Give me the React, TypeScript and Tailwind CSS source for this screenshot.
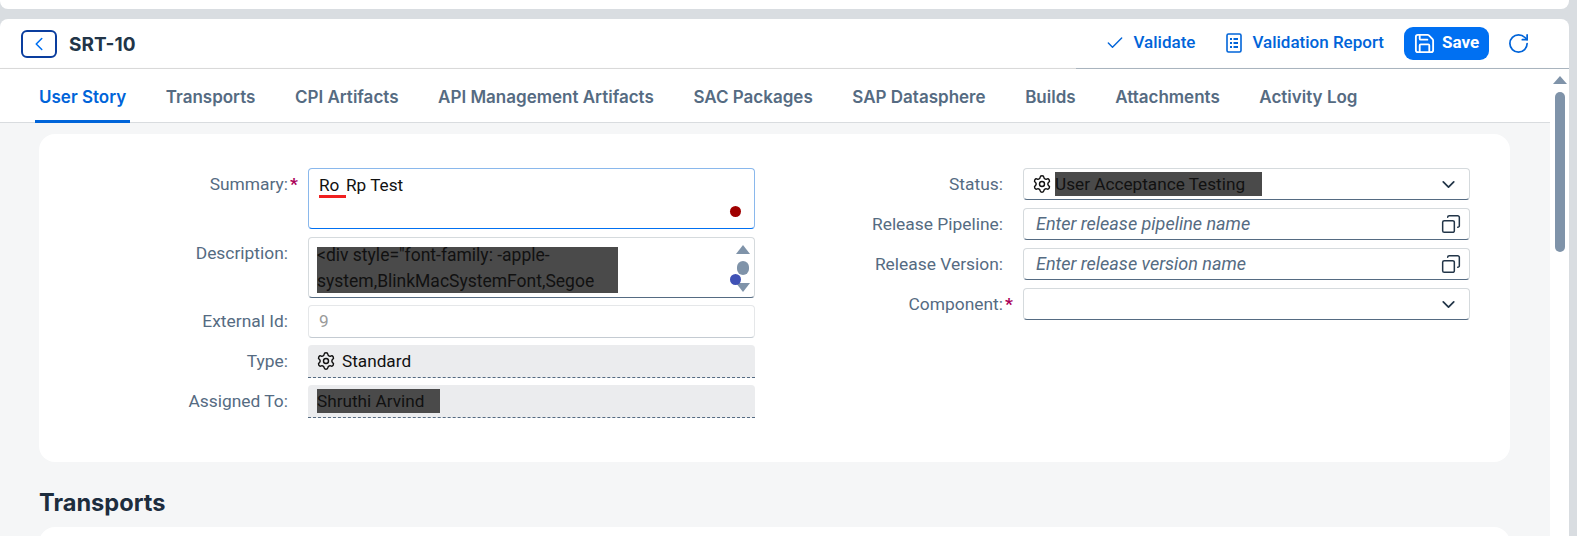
import { Check, ChevronDown, ChevronLeft, Copy, RotateCw, Save, Settings } from "lucide-react";

const tabs = ["User Story", "Transports", "CPI Artifacts", "API Management Artifacts", "SAC Packages", "SAP Datasphere", "Builds", "Attachments", "Activity Log"];

function Label({ text, required, width }: { text: string; required?: boolean; width: string }) {
  return (
    <div className={`flex shrink-0 pt-[4px] text-[17.4px] leading-[24px] text-[#556b82] ${width}`}>
      <span className="flex-1 text-right">{text}</span>
      <span className="w-[20px] pl-[2px] font-bold text-[#aa0058]">{required ? "*" : ""}</span>
    </div>
  );
}

function ReportIcon() {
  return (
    <svg width="16" height="20" viewBox="0 0 16 20" fill="none" stroke="currentColor" strokeWidth="1.6">
      <rect x="1" y="1" width="14" height="18" rx="1.5" />
      <path d="M4 6h2M7.5 6h4.5M4 10h2M7.5 10h4.5M4 14h2M7.5 14h4.5" strokeWidth="2" />
    </svg>
  );
}

export default function App() {
  return (
    <div className="h-[536px] w-[1577px] overflow-hidden bg-[#d9dde1] font-['Roboto',sans-serif] text-[17.2px]">
      {/* 상단 바 */}
      <div className="h-[9px] w-[1569px] rounded-b-lg bg-white" />

      <div className="mt-[10px] flex h-[517px] w-[1569px] flex-col overflow-hidden rounded-t-lg bg-white">
        {/* 헤더 */}
        <div className="relative flex h-[50px] shrink-0 items-center border-b border-[#d9d9d9] pl-[21px] pr-[39px]">
          <div className="flex h-[28px] w-[36px] items-center justify-center rounded-[6px] border-2 border-[#0a3d9e] text-[#0070f2]">
            <ChevronLeft size={22} strokeWidth={1.7} />
          </div>
          <span className="ml-[12px] mt-[3px] font-['Inter',sans-serif] text-[19px] font-bold text-[#223548]">SRT-10</span>
          <div className="ml-auto flex items-center pb-[1px] text-[#0064d9]">
            <Check size={20} strokeWidth={1.7} />
            <span className="ml-[8px] text-[17px] font-medium">Validate</span>
            <span className="ml-[31px] flex"><ReportIcon /></span>
            <span className="ml-[10px] text-[17px] font-medium">Validation Report</span>
            <div className="ml-[20px] flex h-[33px] w-[85px] items-center rounded-[9px] bg-[#0070f2] pl-[9px] text-white">
              <Save size={23} strokeWidth={1.9} />
              <span className="ml-[6px] text-[17px] font-bold">Save</span>
            </div>
            <RotateCw size={23} strokeWidth={1.8} className="ml-[18px]" />
          </div>
          <div className="absolute bottom-[-1px] left-[1076px] right-0 h-px bg-[#a9b4be]" />
        </div>

        <div className="flex min-h-0 flex-1">
          <div className="flex w-[1550px] flex-col">
            {/* 탭 */}
            <div className="flex h-[54px] shrink-0 border-b border-[#d9dcdf] bg-white pl-[35px] font-['Inter',sans-serif] shadow-[0_1px_4px_rgba(0,0,0,0.08)]">
              {tabs.map((t, i) => (
                <div
                  key={t}
                  className={`mr-[31.6px] flex h-[54px] items-center border-b-[3px] px-[4px] pt-[6px] text-[17px] font-semibold ${
                    i === 0 ? "border-[#0064d9] text-[#0064d9]" : "border-transparent text-[#556b82]"
                  }`}
                >
                  {t}
                </div>
              ))}
            </div>

            {/* 본문 */}
            <div className="flex-1 bg-[#f5f6f7] pl-[39px] pr-[40px] pt-[11px]">
              <div className="flex h-[328px] rounded-2xl bg-white pt-[34px]">
                {/* 왼쪽 폼 */}
                <div className="flex w-[716px] flex-col">
                  <div className="flex">
                    <Label text="Summary:" required width="w-[269px]" />
                    <div className="relative h-[61px] w-[447px] rounded-[4px] border border-[#8ab8ec] border-b-[#0070f2] px-[10px] pt-[4px] leading-[24px] text-[#111]">
                      <span className="inline-block h-[25px] w-[27px] whitespace-nowrap border-b-[3px] border-[#f02020]">Ro</span>Rp Test
                      <span className="absolute bottom-[11px] right-[13px] h-[11px] w-[11px] rounded-full bg-[#a00000]" />
                    </div>
                  </div>
                  <div className="mt-[8px] flex">
                    <Label text="Description:" width="w-[269px]" />
                    <div className="relative h-[61px] w-[447px] rounded-[4px] border border-[#d5dadd] border-b-[#556b82] pl-[8px] pt-[9px] text-[17.5px] leading-[26px] text-[#111]">
                      <div className="flex h-[46px] w-[301px] flex-col bg-[#4a4a4a]">
                        <div className="-mt-[5px] whitespace-nowrap">
                          {'<div style="font-family: -apple-'}
                          <br />
                          system,BlinkMacSystemFont,Segoe
                        </div>
                      </div>
                      <span className="absolute right-[4px] top-[7px] h-0 w-0 border-x-[7px] border-b-[9px] border-x-transparent border-b-[#7f93a9]" />
                      <span className="absolute right-[5px] top-[23px] h-[14px] w-[12px] rounded-full bg-[#7f93a9]" />
                      <span className="absolute bottom-[5px] right-[4px] h-0 w-0 border-x-[7px] border-t-[9px] border-x-transparent border-t-[#7f93a9]" />
                      <span className="absolute right-[13px] top-[36px] h-[11px] w-[11px] rounded-full bg-[#3f51b5]" />
                    </div>
                  </div>
                  <div className="mt-[7px] flex">
                    <Label text="External Id:" width="w-[269px]" />
                    <div className="h-[33px] w-[447px] rounded-[4px] border border-[#e5e7e9] border-b-[#c4cbd2] pl-[10px] leading-[31px] text-[#9a9a9a]">9</div>
                  </div>
                  <div className="mt-[7px] flex">
                    <Label text="Type:" width="w-[269px]" />
                    <div className="flex h-[33px] w-[447px] items-center rounded-t-[4px] border-b border-dashed border-[#556b82] bg-[#ebecee] pl-[8px] text-[#111]">
                      <Settings size={20} strokeWidth={1.7} />
                      <span className="ml-[6px] mt-[1px]">Standard</span>
                    </div>
                  </div>
                  <div className="mt-[7px] flex">
                    <Label text="Assigned To:" width="w-[269px]" />
                    <div className="flex h-[33px] w-[447px] items-center rounded-t-[4px] border-b border-dashed border-[#556b82] bg-[#ebecee] pl-[9px] text-[#111]">
                      <span className="w-[123px] bg-[#4a4a4a] leading-[24px]">Shruthi Arvind</span>
                    </div>
                  </div>
                </div>

                {/* 오른쪽 폼 */}
                <div className="ml-[45px] flex flex-col gap-[8px]">
                  <div className="flex">
                    <Label text="Status:" width="w-[223px]" />
                    <div className="flex h-[32px] w-[447px] items-center rounded-[4px] border border-[#d5dadd] border-b-[#556b82] pl-[8px] pr-[10px] text-[#111]">
                      <Settings size={20} strokeWidth={1.7} />
                      <span className="ml-[3px] w-[207px] whitespace-nowrap bg-[#4a4a4a] leading-[24px]">User Acceptance Testing</span>
                      <ChevronDown size={21} strokeWidth={2} className="ml-auto text-[#223548]" />
                    </div>
                  </div>
                  <div className="flex">
                    <Label text="Release Pipeline:" width="w-[223px]" />
                    <div className="flex h-[32px] w-[447px] items-center rounded-[4px] border border-[#d5dadd] border-b-[#556b82] pl-[12px] pr-[8px] text-[18px] italic text-[#556b82]">
                      <span className="mb-[2px]">Enter release pipeline name</span>
                      <Copy size={20} strokeWidth={1.8} className="ml-auto -scale-x-100 text-[#223548]" />
                    </div>
                  </div>
                  <div className="flex">
                    <Label text="Release Version:" width="w-[223px]" />
                    <div className="flex h-[32px] w-[447px] items-center rounded-[4px] border border-[#d5dadd] border-b-[#556b82] pl-[12px] pr-[8px] text-[18px] italic text-[#556b82]">
                      <span className="mb-[2px]">Enter release version name</span>
                      <Copy size={20} strokeWidth={1.8} className="ml-auto -scale-x-100 text-[#223548]" />
                    </div>
                  </div>
                  <div className="flex">
                    <Label text="Component:" required width="w-[223px]" />
                    <div className="flex h-[32px] w-[447px] items-center rounded-[4px] border border-[#d5dadd] border-b-[#556b82] pr-[10px]">
                      <ChevronDown size={21} strokeWidth={2} className="ml-auto text-[#223548]" />
                    </div>
                  </div>
                </div>
              </div>

              <h2 className="mt-[27px] h-[38px] font-['Inter',sans-serif] text-[23.6px] font-bold leading-[28px] text-[#1d2d3e]">Transports</h2>
              <div className="h-[60px] rounded-2xl bg-white" />
            </div>
          </div>

          {/* 스크롤바 */}
          <div className="flex w-[19px] shrink-0 flex-col items-center bg-white pt-[7px]">
            <span className="h-0 w-0 border-x-[7px] border-b-[8px] border-x-transparent border-b-[#7f93a9]" />
            <span className="mt-[8px] h-[160px] w-[10px] rounded-full bg-[#7f93a9]" />
          </div>
        </div>
      </div>
    </div>
  );
}
